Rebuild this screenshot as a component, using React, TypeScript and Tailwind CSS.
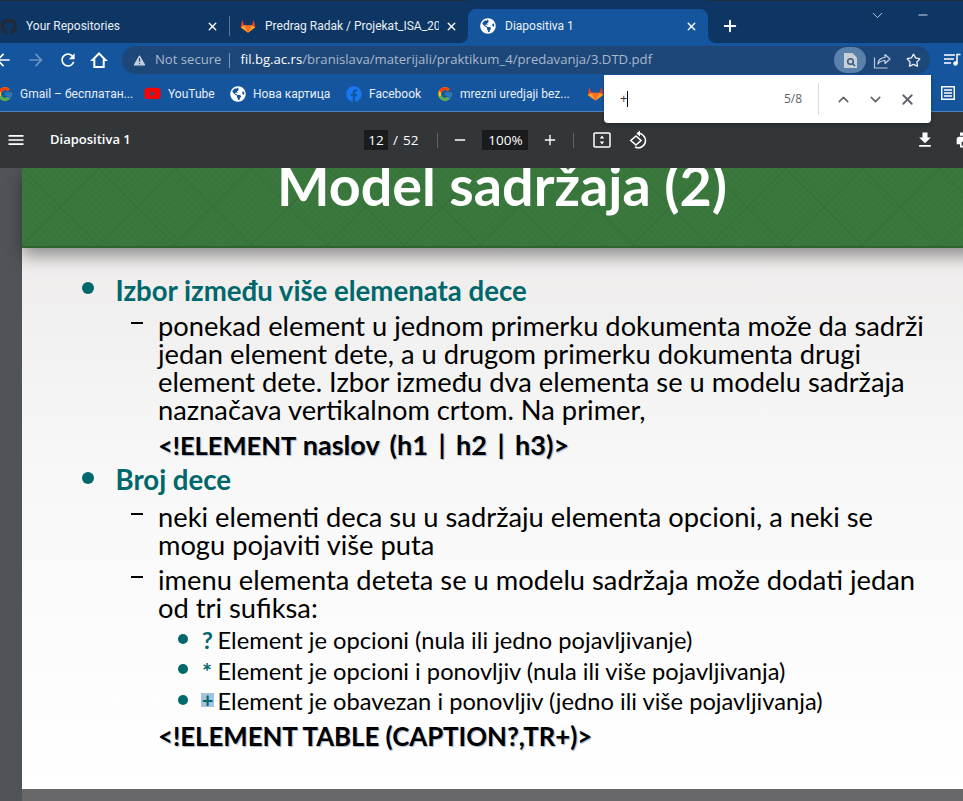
import React from "react";
import { FaGithub, FaYoutube, FaFacebook, FaGlobeAmericas } from "react-icons/fa";
import { FcGoogle } from "react-icons/fc";
import { TriangleAlert, Star, ChevronUp, ChevronDown, X, Plus, Minus } from "lucide-react";

const Gitlab = ({ size = 16 }: { size?: number }) => (
  <svg width={size} height={size} viewBox="0 0 24 24" className="shrink-0">
    <path d="M12 22 1 14l2.200-11 3.300 8h11l3.300-8L23 14z" fill="#e24329" />
    <path d="M12 22 6.500 11h11z" fill="#fc6d26" />
    <path d="M12 22 1 14l5.500-3zM12 22l11-8-5.500-3z" fill="#fca326" />
  </svg>
);

const Mat = ({ d, size = 20, color = "#fff", className = "" }: { d: string; size?: number; color?: string; className?: string }) => (
  <svg width={size} height={size} viewBox="0 0 24 24" fill={color} className={`shrink-0 ${className}`}>
    <path d={d} />
  </svg>
);

const Globe = ({ size = 16 }: { size?: number }) => <FaGlobeAmericas size={size} color="#fff" className="shrink-0" />;

function Tab({ icon, label, w, cls = "" }: { icon: React.ReactNode; label: string; w: string; cls?: string }) {
  return (
    <div className={`flex items-center h-full relative shrink-0 ${w} ${cls}`}>
      <span className="w-[16px] flex justify-center shrink-0">{icon}</span>
      <span className="ml-[9px] text-[12px] font-['Roboto',sans-serif] text-[#e9eff6] whitespace-nowrap overflow-hidden flex-1">{label}</span>
      <X size={13} strokeWidth={2.6} color="#fff" className="shrink-0 mr-[10px] ml-[6px]" />
    </div>
  );
}

function Bookmark({ icon, label, w }: { icon: React.ReactNode; label: string; w: string }) {
  return (
    <div className={`flex items-center gap-[7px] shrink-0 ${w}`}>
      {icon}
      <span className="text-[12px] font-['Roboto',sans-serif] text-[#e9eff6] whitespace-nowrap">{label}</span>
    </div>
  );
}

function L1({ children, mt = "", dot = "mt-[7px]" }: { children: React.ReactNode; mt?: string; dot?: string }) {
  return (
    <div className={`flex items-start h-[32px] ${mt}`}>
      <span className={`w-[12px] h-[12px] rounded-full bg-[#00676b] ml-[60px] shrink-0 ${dot}`} />
      <span className="ml-[21.5px] text-[27.6px] leading-[32px] font-bold text-[#00676b] whitespace-nowrap">{children}</span>
    </div>
  );
}

function L2({ lines, mt = "" }: { lines: string[]; mt?: string }) {
  return (
    <div className={`flex items-start ${mt}`}>
      <span className="w-[12px] h-[2px] bg-black mt-[10px] ml-[109px] shrink-0" />
      <div className="ml-[15px] text-[27.3px] leading-[28px] text-black">
        {lines.map((l) => (
          <div key={l} className="whitespace-nowrap">{l}</div>
        ))}
      </div>
    </div>
  );
}

function L3({ mark, text }: { mark: React.ReactNode; text: string }) {
  return (
    <div className="flex items-start h-[30.5px]">
      <span className="w-[10px] h-[10px] rounded-full bg-[#00676b] mt-[8.5px] ml-[156px] shrink-0" />
      <span className="ml-[13px] w-[16.5px] shrink-0 flex items-start text-[23.7px] leading-[31px] font-bold text-[#00676b]">{mark}</span>
      <span className="text-[23.7px] leading-[31px] text-black whitespace-nowrap">{text}</span>
    </div>
  );
}

const Code = ({ children, mt = "", extra = "" }: { children: React.ReactNode; mt?: string; extra?: string }) => (
  <div className={`ml-[136px] leading-[32px] font-bold text-black whitespace-nowrap [text-shadow:1px_1px_1px_#9fb4cc] ${mt} ${extra}`}>{children}</div>
);

export default function App() {
  return (
    <div className="w-[963px] h-[801px] overflow-hidden relative flex flex-col bg-[#505458] font-['Open_Sans','Noto_Sans',sans-serif]">
      {/* tab strip */}
      <div className="h-[43px] bg-[#14559e] shrink-0 flex">
        <div className="w-[475px] shrink-0 h-full bg-[#0d3664] rounded-br-[8px] border-t border-[#1c2b3e] flex items-center pt-[8px] -ml-[7px]">
          <Tab icon={<FaGithub size={17} color="#24292e" />} label="Your Repositories" w="w-[236px]" cls="pl-[8px]" />
          <span className="w-px h-[20px] bg-[#5a7899] shrink-0" />
          <Tab icon={<Gitlab />} label="Predrag Radak / Projekat_ISA_2022" w="w-[238px]" cls="pl-[10px]" />
        </div>
        <div className="w-[240px] shrink-0 h-full bg-[#0d3664]">
          <div className="h-full mt-[9px] bg-[#14559e] rounded-t-[8px] flex items-center pb-[9px]">
            <Tab icon={<Globe />} label="Diapositiva 1" w="w-[240px]" cls="pl-[12px]" />
          </div>
        </div>
        <div className="flex-1 h-full bg-[#0d3664] rounded-bl-[8px] border-t border-[#1c2b3e] flex items-start relative">
          <Plus size={18} strokeWidth={2.6} color="#fff" className="mt-[16px] ml-[13px]" />
          <ChevronDown size={17} strokeWidth={1.2} color="#dbe6f2" className="mt-[6px] ml-[130px]" />
          <Minus size={14} strokeWidth={1.4} color="#fff" className="mt-[7px] ml-[30px]" />
        </div>
      </div>

      {/* toolbar */}
      <div className="h-[34px] bg-[#14559e] shrink-0 flex items-center">
        <Mat d="M20 11H7.830l5.590-5.590L12 4l-8 8 8 8 1.410-1.410L7.830 13H20v-2z" className="-ml-[7px]" />
        <Mat d="M12 4l-1.410 1.410L16.170 11H4v2h12.170l-5.580 5.590L12 20l8-8z" color="#6b92c0" className="ml-[13px]" />
        <Mat d="M17.650 6.350A7.958 7.958 0 0 0 12 4c-4.420 0-7.990 3.580-7.990 8s3.570 8 7.990 8c3.730 0 6.840-2.550 7.730-6h-2.080A5.990 5.990 0 0 1 12 18c-3.310 0-6-2.690-6-6s2.690-6 6-6c1.660 0 3.140.69 4.220 1.780L13 11h7V4l-2.350 2.350z" className="ml-[12px]" />
        <svg width="18" height="18" viewBox="0 0 18 18" fill="none" className="ml-[12px] shrink-0">
          <path d="M9 2.500 2.500 9H4.300v7h9.400V9h1.800z" stroke="#fff" strokeWidth="2" strokeLinejoin="miter" />
        </svg>
        <div className="ml-[14px] w-[808px] h-[28px] rounded-full bg-[#1d4679] flex items-center shrink-0">
          <TriangleAlert size={15} fill="#c3cfdc" color="#1d4679" className="ml-[10px]" />
          <span className="ml-[8px] text-[13.1px] text-[#a9bacd]">Not secure</span>
          <span className="w-px h-[15px] bg-[#7e97b4] ml-[8px]" />
          <span className="ml-[10px] text-[13.13px] text-white whitespace-nowrap">fil.bg.ac.rs<span className="text-[#a9bacd]">/branislava/materijali/praktikum_4/predavanja/3.DTD.pdf</span></span>
          <div className="ml-auto flex items-center mr-[9px]">
            <span className="w-[32px] h-[26px] rounded-full bg-[#5a81ab] flex items-center justify-center">
              <svg width="15" height="17" viewBox="0 0 15 17" fill="none">
                <path d="M1 1h8.500L14 5.500V16H1z" fill="#c9cfd6" />
                <circle cx="7.500" cy="9.500" r="2.800" stroke="#35587f" strokeWidth="1.500" />
                <path d="m9.500 11.500 2.500 2.500" stroke="#35587f" strokeWidth="1.500" />
              </svg>
            </span>
            <svg width="18" height="17" viewBox="0 0 18 17" fill="none" className="ml-[7px]">
              <path d="M1.500 5.500v10.500h13" stroke="#b9c9db" strokeWidth="1.200" />
              <path d="M5 12c0-4 3-6.500 7-6.500V2.500l5 4.500-5 4.500V8.500c-3 0-5 1-7 3.500z" stroke="#c8d5e4" strokeWidth="1.200" strokeLinejoin="round" />
            </svg>
            <Star size={15} strokeWidth={2.2} color="#e4ebf3" className="ml-[15px]" />
          </div>
        </div>
        <svg width="17" height="14" viewBox="0 0 17 14" fill="none" className="ml-[14px] shrink-0">
          <path d="M0 2h11M0 6h10M0 10h7" stroke="#fff" strokeWidth="1.500" />
          <path d="M13 10.500V1.500h3.500" stroke="#fff" strokeWidth="1.500" />
          <circle cx="11.500" cy="10.500" r="2.200" fill="#fff" />
        </svg>
      </div>

      {/* bookmarks */}
      <div className="h-[35px] bg-[#14559e] border-b border-[#4f81ba] shrink-0 flex items-center pb-[1px]">
        <div className="-ml-[3px] flex items-center">
          <Bookmark icon={<FcGoogle size={16} />} label="Gmail – бесплатан..." w="w-[147px]" />
          <Bookmark icon={<FaYoutube size={17} color="#f00" />} label="YouTube" w="w-[86px]" />
          <Bookmark icon={<Globe />} label="Нова картица" w="w-[116px]" />
          <Bookmark icon={<FaFacebook size={16} color="#1877f2" />} label="Facebook" w="w-[91px]" />
          <Bookmark icon={<FcGoogle size={16} />} label="mrezni uredjaji bez..." w="w-[150px]" />
          <Gitlab size={17} />
        </div>
      </div>

      {/* pdf toolbar */}
      <div className="h-[56px] bg-[#323639] shrink-0 flex items-center text-white relative z-10">
        <Mat d="M3 18h18v-2H3v2zm0-5h18v-2H3v2zm0-7v2h18V6H3z" className="ml-[6px]" />
        <span className="ml-[24px] text-[13px] font-semibold w-[314px] shrink-0">Diapositiva 1</span>
        <span className="w-[24px] h-[20px] bg-[#191b1c] flex items-center justify-center text-[13.5px] shrink-0">12</span>
        <span className="ml-[5px] text-[13.5px] shrink-0">/</span>
        <span className="ml-[5px] text-[13.5px] shrink-0">52</span>
        <span className="ml-[19px] w-px h-[15px] bg-[#5f6368] shrink-0" />
        <Minus size={16} strokeWidth={2} className="ml-[14px] shrink-0" />
        <span className="ml-[14px] w-[46px] h-[20px] bg-[#191b1c] flex items-center justify-center text-[13.5px] shrink-0">100%</span>
        <Plus size={16} strokeWidth={2} className="ml-[14px] shrink-0" />
        <span className="ml-[15px] w-px h-[15px] bg-[#5f6368] shrink-0" />
        <svg width="20" height="20" viewBox="0 0 20 20" fill="none" className="ml-[18px] shrink-0">
          <rect x="2" y="3" width="16" height="14" rx="1" stroke="#fff" strokeWidth="1.500" />
          <path d="M10 5.500 12.200 8.500H7.800zM10 14.500 7.800 11.500h4.400z" fill="#fff" />
        </svg>
        <svg width="20" height="20" viewBox="0 0 20 20" fill="none" className="ml-[17px] shrink-0">
          <path d="M8 3.500A7.200 7.200 0 1 1 6 17" stroke="#fff" strokeWidth="1.500" />
          <path d="M11 0.500 7.500 3.500 11 6.500" fill="#fff" />
          <path d="M7 6 1.800 10.500 7 15l5-4.500z" stroke="#fff" strokeWidth="1.600" fill="#323639" />
        </svg>
        <Mat d="M19 9h-4V3H9v6H5l7 7 7-7zM5 18v2h14v-2H5z" className="ml-[266px]" />
        <Mat d="M19 8H5c-1.660 0-3 1.340-3 3v6h4v4h12v-4h4v-6c0-1.660-1.340-3-3-3zm-3 11H8v-5h8v5zm3-7c-.550 0-1-.450-1-1s.450-1 1-1 1 .450 1 1-.450 1-1 1zm-1-9H6v4h12V3z" className="ml-[20px]" />
      </div>

      {/* pdf viewport */}
      <div className="flex-1 min-h-0 pl-[22px]">
        <div className="w-[1000px] h-[621px] bg-gradient-to-b from-[#ebe9e8] via-[#f8f8f8] to-white relative font-['Lato',sans-serif]">
          <div className="h-[80px] bg-[#3a783d] relative overflow-hidden border-b-2 border-[#2f6430] shadow-[0_8px_16px_rgba(0,0,0,0.4)]">
            <svg className="absolute inset-0" width="1000" height="80">
              <defs>
                <pattern id="p" width="54" height="54" patternUnits="userSpaceOnUse" patternTransform="rotate(45)">
                  <path d="M0 0H54M0 0V54" stroke="#2e6831" strokeWidth="1" fill="none" />
                </pattern>
                <pattern id="q" width="5" height="5" patternUnits="userSpaceOnUse" patternTransform="rotate(45)">
                  <path d="M0 0H5M0 0V5" stroke="#367238" strokeWidth="1" fill="none" />
                </pattern>
              </defs>
              <rect width="1000" height="80" fill="url(#q)" />
              <rect width="1000" height="80" fill="url(#p)" />
            </svg>
            <div className="relative w-[960px] text-center -mt-[8px] text-[55.7px] leading-[50px] font-bold text-white whitespace-nowrap">Model sadržaja (2)</div>
          </div>
          <span className="absolute left-[73px] top-[514px] text-[19px] text-white whitespace-nowrap">Your company name</span>
          <div className="pt-[27px] relative">
            <L1>Izbor između više elemenata dece</L1>
            <L2 mt="mt-[5px]" lines={["ponekad element u jednom primerku dokumenta može da sadrži", "jedan element dete, a u drugom primerku dokumenta drugi", "element dete. Izbor između dva elementa se u modelu sadržaja", "naznačava vertikalnom crtom. Na primer,"]} />
            <Code mt="mt-[5px]" extra="text-[27px] [word-spacing:4px]"><span className="text-[25.5px] -mr-[4px]">{"<!ELEMENT"}</span>{" naslov (h1 | h2 | h3)>"}</Code>
            <L1 mt="mt-[3px]" dot="mt-[8px]">Broj dece</L1>
            <L2 mt="mt-[7px]" lines={["neki elementi deca su u sadržaju elementa opcioni, a neki se", "mogu pojaviti više puta"]} />
            <L2 mt="mt-[7px]" lines={["imenu elementa deteta se u modelu sadržaja može dodati jedan", "od tri sufiksa:"]} />
            <div className="mt-[3px]">
              <L3 mark={<span className="ml-[1px]">?</span>} text="Element je opcioni (nula ili jedno pojavljivanje)" />
              <L3 mark={<span className="ml-[1px]">*</span>} text="Element je opcioni i ponovljiv (nula ili više pojavljivanja)" />
              <L3 mark={<span className="bg-[#a3c3de] w-[13px] h-[14px] mt-[7px] flex items-center justify-center text-[20px] leading-none">+</span>} text="Element je obavezan i ponovljiv (jedno ili više pojavljivanja)" />
            </div>
            <Code mt="mt-[3px]" extra="text-[25.8px]">{"<!ELEMENT TABLE (CAPTION?,TR+)>"}</Code>
          </div>
        </div>
        <div className="w-[1000px] h-[12px] bg-[#68686a]" />
      </div>

      {/* find bar */}
      <div className="absolute left-[604px] top-[75px] w-[327px] h-[48px] bg-white rounded-b-[4px] shadow-[0_2px_4px_rgba(0,0,0,0.25)] z-20 flex items-center">
        <span className="ml-[16px] text-[13px] text-[#333]">+</span>
        <span className="w-px h-[16px] bg-black" />
        <span className="ml-auto text-[12px] text-[#5f6368]">5/8</span>
        <span className="ml-[16px] w-px h-[32px] bg-[#dadce0]" />
        <ChevronUp size={17} strokeWidth={2.2} color="#5f6368" className="ml-[16px]" />
        <ChevronDown size={17} strokeWidth={2.2} color="#5f6368" className="ml-[15px]" />
        <X size={17} strokeWidth={2.6} color="#5f6368" className="ml-[15px] mr-[15px]" />
      </div>
      <div className="absolute left-[941px] top-[86px] z-20">
        <svg width="14" height="14" viewBox="0 0 14 14" fill="none">
          <rect x="0.750" y="0.750" width="12.500" height="12.500" stroke="#fff" strokeWidth="1.500" />
          <path d="M3 4h8M3 7h8M3 10h8" stroke="#fff" strokeWidth="1.400" />
        </svg>
      </div>
    </div>
  );
}
